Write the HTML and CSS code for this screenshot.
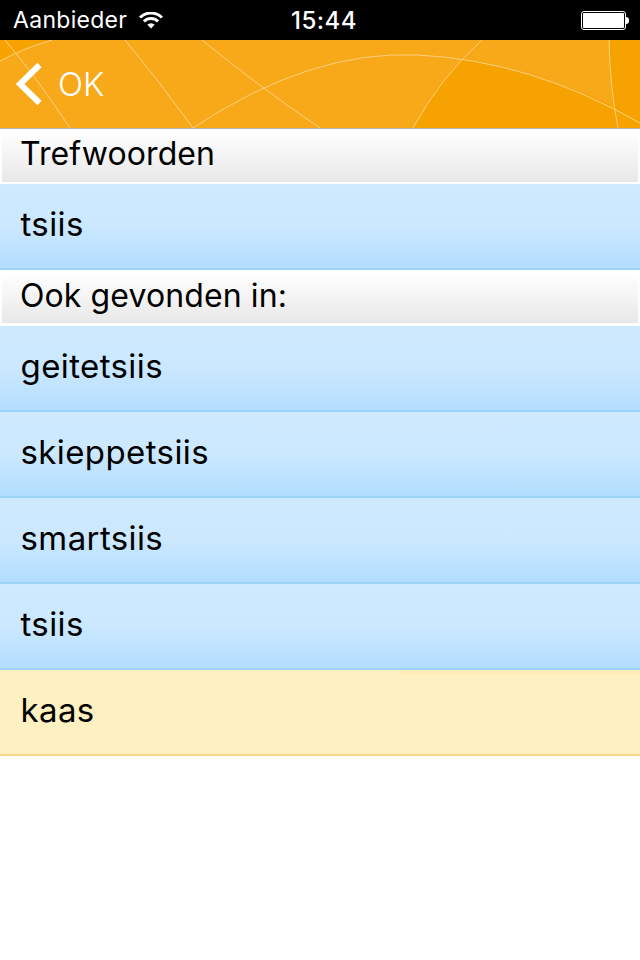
FILE: index.html
```html
<!DOCTYPE html>
<html lang="en">
<head>
  <meta charset="UTF-8">
  <meta name="viewport" content="width=device-width, initial-scale=1.0">
  <title>Trefwoorden</title>
  <link rel="stylesheet" href="styles.css">
</head>
<body>
  <div class="status-bar">
    <div class="status-left">
      <span class="carrier">Aanbieder</span>
      <svg class="wifi" width="24" height="17" viewBox="0 0 24 17">
        <path d="M1.04 5.54 A15.5 15.5 0 0 1 22.96 5.54" fill="none" stroke="#fff" stroke-width="3"/>
        <path d="M4.93 9.43 A10 10 0 0 1 19.07 9.43" fill="none" stroke="#fff" stroke-width="3"/>
        <path d="M8.32 12.82 A5.2 5.2 0 0 1 15.68 12.82 L12 16.5 Z" fill="#fff"/>
      </svg>
    </div>
    <span class="clock">15:44</span>
    <div class="battery">
      <div class="battery-body"><div class="battery-fill"></div></div>
      <div class="battery-nub"></div>
    </div>
  </div>

  <header class="nav-bar">
    <svg class="nav-bg" width="640" height="88" viewBox="0 40 640 88">
      <path d="M0 40 H52 Q24 48 0 61 Z" fill="#f6a200"/>
      <path d="M413 128 Q434 88 463 58 Q545 74 613 106 L609 40 H640 V128 H413 Z" fill="#f6a200"/>
      <g fill="none" stroke="#fbd07f" stroke-width="1">
        <path d="M0 61 Q24 48 52 40"/>
        <path d="M5 40 Q40 82 70 128"/>
        <path d="M125 40 Q160 82 193 128"/>
        <path d="M202 40 Q258 86 320 128"/>
        <path d="M193 128 Q310 50 417 55 Q530 60 640 123"/>
        <path d="M482 40 Q440 78 413 128"/>
        <path d="M609 40 Q610 88 618 128"/>
      </g>
    </svg>
    <a class="back-link" href="#">
      <svg class="chevron" width="26" height="44" viewBox="0 0 26 44">
        <path d="M23.5 3 L4 22 L23.5 41" fill="none" stroke="#fff" stroke-width="6"/>
      </svg>
      <span>OK</span>
    </a>
  </header>

  <main>
    <h2 class="section-head section-first"><span>Trefwoorden</span></h2>
    <div class="row">tsiis</div>
    <h2 class="section-head"><span>Ook gevonden in:</span></h2>
    <div class="row">geitetsiis</div>
    <div class="row">skieppetsiis</div>
    <div class="row">smartsiis</div>
    <div class="row">tsiis</div>
    <div class="row row-yellow">kaas</div>
  </main>
</body>
</html>
```

FILE: styles.css
```css
body {
  margin: 0;
  padding: 0;
  background-color: #ffffff;
  color: #000;
  font-family: 'Inter', 'Liberation Sans', sans-serif;
}

/* Status bar */
.status-bar {
  height: 40px;
  background-color: #000;
  color: #fff;
  display: flex;
  align-items: center;
  justify-content: space-between;
  padding: 0 11px 0 13px;
  box-sizing: border-box;
  position: relative;
}

.status-left {
  display: flex;
  align-items: center;
  gap: 12px;
}

.carrier {
  font-size: 23px;
  letter-spacing: 0.3px;
}

.wifi {
  margin-top: 1px;
}

.clock {
  position: absolute;
  left: 291px;
  font-size: 24px;
  font-weight: 500;
  letter-spacing: 0.5px;
}

.battery {
  display: flex;
  align-items: center;
}

.battery-body {
  width: 45px;
  height: 19px;
  box-sizing: border-box;
  border: 1px solid #fff;
  border-radius: 3px;
  padding: 1px;
}

.battery-fill {
  height: 100%;
  background-color: #fff;
  border-radius: 1px;
}

.battery-nub {
  width: 3px;
  height: 7px;
  background-color: #fff;
  border-radius: 0 3px 3px 0;
}

/* Orange header */
.nav-bar {
  height: 88px;
  background-color: #f8a91a;
  border-bottom: 1px solid #b5b5b5;
  position: relative;
  display: flex;
  align-items: center;
}

.nav-bg {
  position: absolute;
  left: 0;
  top: 0;
}

.back-link {
  position: relative;
  display: flex;
  align-items: center;
  gap: 16px;
  padding-left: 16px;
  color: #fff;
  text-decoration: none;
  font-weight: 300;
  font-size: 33px;
}

/* Grey section titles */
.section-head {
  margin: 0;
  height: 56px;
  box-sizing: border-box;
  padding: 3px 2px 3px;
  background-color: #fff;
  font-size: 32px;
  font-weight: normal;
  letter-spacing: 0.1px;
  display: flex;
}

.section-first {
  height: 55px;
  padding: 2px 2px 2px;
}

.section-head span {
  flex: 1;
  padding-left: 18px;
  line-height: 45px;
  background: linear-gradient(#ffffff, #e8e8e8);
}

.row {
  height: 86px;
  box-sizing: border-box;
  padding-left: 20.5px;
  line-height: 81px;
  font-size: 33px;
  letter-spacing: 0.4px;
  background: linear-gradient(#cfeaff 0%, #cbe8ff 50%, #b4deff 97%);
  border-bottom: 2px solid #9dd3f9;
}

.row-yellow {
  position: relative;
  background: #fff0c2;
  border-bottom: 2px solid #f8d98a;
}

/* faint band along the top of the yellow row */
.row-yellow::before {
  content: "";
  position: absolute;
  top: 0;
  left: 400px;
  right: 0;
  height: 4px;
  background-color: #ffecb8;
}
```
